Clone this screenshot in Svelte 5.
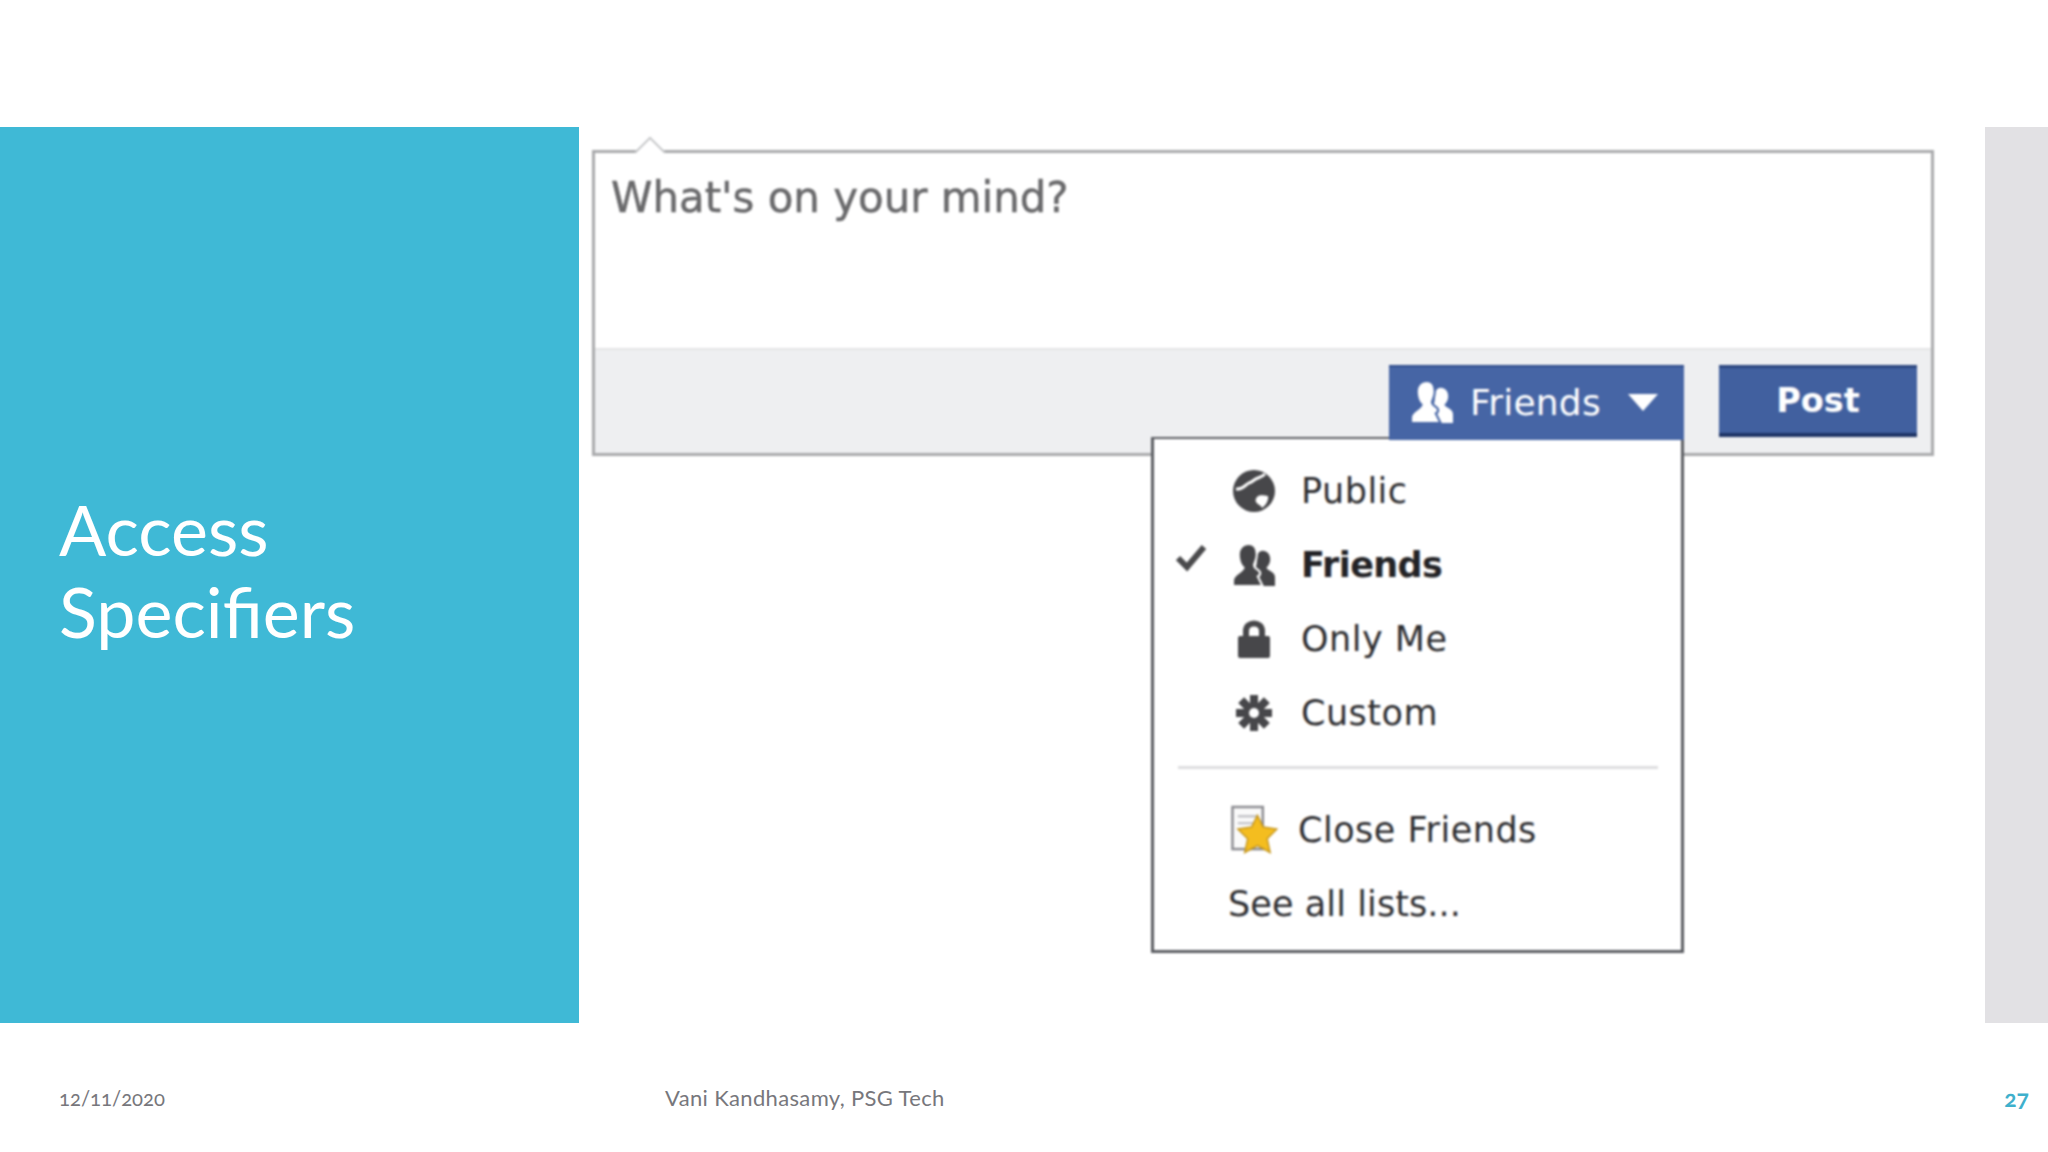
<script>
  const privacy = [
    { label: 'Public', icon: 'globe' },
    { label: 'Friends', icon: 'friends', active: true },
    { label: 'Only Me', icon: 'lock' },
    { label: 'Custom', icon: 'gear' }
  ];
  const teeth = [0, 45, 90, 135, 180, 225, 270, 315];
</script>

{#snippet friendsIcon(color, cut)}
  <svg class="icon-svg" viewBox="0 0 44 44">
    <path fill={color} d="M31 7c5 0 8 4 8 9 0 4-2 7-4 9 1 3 9 4 9 10v9H24V24c1-3 1-5 1-9 0-4 2-8 6-8z" />
    <path fill={color} stroke={cut} stroke-width="2.2" d="M16 0c6 0 9 5 9 11 0 5-2 8-3 11 0 4 4 4 6 7 1 2 0 4-2 5l5 10H0v-6c0-6 9-8 11-13-3-3-5-8-5-14C6 5 10 0 16 0z" />
  </svg>
{/snippet}

<div class="slide">
  <div class="main">
    <aside class="side">
      <h1>Access<br />Specifiers</h1>
    </aside>

    <section class="content">
      <div class="composer">
        <span class="notch"></span>
        <div class="prompt">What's on your mind?</div>
        <div class="bar">
          <div class="audience">
            {@render friendsIcon('#fff', '#4665a5')}
            <span>Friends</span>
            <svg class="caret" viewBox="0 0 30 20"><path fill="#fff" d="M0 2h30L15 19z" /></svg>
          </div>
          <div class="post">Post</div>
        </div>

        <div class="menu">
          <ul class="options">
            {#each privacy as item}
              <li class:active={item.active}>
                <span class="check">
                  {#if item.active}
                    <svg viewBox="0 0 30 28"><path fill="none" stroke="#4a4a4c" stroke-width="6" d="M2 14l9 9L28 3" /></svg>
                  {/if}
                </span>
                <span class="icon">
                  {#if item.icon === 'globe'}
                    <svg class="icon-svg" viewBox="0 0 42 42">
                      <circle cx="21" cy="21" r="21" fill="#47474a" />
                      <path fill="none" stroke="#fff" stroke-width="3" d="M3 19c6 1 9-4 13-6 4-1 5-4 9-5 3-1 5-2 7-4" />
                      <path fill="#fff" d="M24 27c4-3 7-1 11-1 1 5-3 10-6 12-1-3-4-3-6-6-1-2 0-4 1-5z" />
                    </svg>
                  {:else if item.icon === 'friends'}
                    {@render friendsIcon('#454548', '#fff')}
                  {:else if item.icon === 'lock'}
                    <svg class="icon-svg lock" viewBox="0 0 32 38">
                      <path fill="none" stroke="#47474a" stroke-width="6" d="M8 18V11c0-10 16-10 16 0v7" />
                      <rect y="16" width="32" height="22" rx="2" fill="#47474a" />
                    </svg>
                  {:else}
                    <svg class="icon-svg gear" viewBox="0 0 36 36">
                      {#each teeth as a}
                        <rect x="14" y="0" width="8" height="36" fill="#47474a" transform="rotate({a} 18 18)" />
                      {/each}
                      <circle cx="18" cy="18" r="10" fill="#47474a" />
                      <circle cx="18" cy="18" r="5" fill="#fff" />
                    </svg>
                  {/if}
                </span>
                <span class="label">{item.label}</span>
              </li>
            {/each}
          </ul>

          <div class="rule"></div>

          <div class="close-friends">
            <svg class="star-icon" viewBox="0 0 48 50">
              <rect x="1.5" y="1.5" width="31" height="43" fill="#fafafa" stroke="#8b8b90" stroke-width="2.5" />
              <path stroke="#c4c4c8" stroke-width="2.5" d="M7 11h20M7 18h20" />
              <path fill="#f4bd1f" stroke="#c6971f" stroke-width="1.5" d="M27 10l6 12 14 2-10 10 3 14-13-7-13 7 3-14L7 24l14-2z" />
            </svg>
            <span>Close Friends</span>
          </div>
          <div class="see-all">See all lists...</div>
        </div>
      </div>
    </section>

    <div class="gutter"></div>
  </div>

  <footer class="foot">
    <span class="date">12/11/2020</span>
    <span class="author">Vani Kandhasamy, PSG Tech</span>
    <span class="page">27</span>
  </footer>
</div>

<style>
  :global(body) {
    margin: 0;
    background: #fff;
  }

  .slide {
    width: 2048px;
    height: 1152px;
    padding-top: 127px;
    box-sizing: border-box;
    display: flex;
    flex-direction: column;
    overflow: hidden;
    font-family: "Lato", "Open Sans", sans-serif;
  }

  .main {
    height: 896px;
    display: flex;
  }

  .side {
    width: 579px;
    background: #3fb9d6;
    display: flex;
    align-items: center;
    padding-left: 59px;
    box-sizing: border-box;
  }

  h1 {
    margin: 0;
    padding-bottom: 10px;
    color: #fff;
    font-size: 70px;
    font-weight: 400;
    line-height: 82px;
  }

  .content {
    flex: 1;
    padding: 23px 0 0 13px;
    min-width: 0;
  }

  .gutter {
    width: 63px;
    background: #e2e1e4;
  }

  .composer {
    position: relative;
    width: 1342px;
    height: 306px;
    box-sizing: border-box;
    border: 3px solid #a9aaac;
    display: flex;
    flex-direction: column;
    filter: blur(0.8px);
    font-family: "DejaVu Sans", sans-serif;
  }

  .notch {
    position: absolute;
    left: 44px;
    top: -12px;
    width: 20px;
    height: 20px;
    background: #fff;
    border-top: 2px solid #c4c5c7;
    border-left: 2px solid #c4c5c7;
    transform: rotate(45deg);
  }

  .prompt {
    position: relative;
    height: 197px;
    box-sizing: border-box;
    padding: 19px 0 0 16px;
    color: #69696b;
    font-size: 41.9px;
    line-height: 52px;
    -webkit-text-stroke: 0.5px #69696b;
    border-bottom: 2px solid #e4e5e6;
  }

  .bar {
    flex: 1;
    background: #eeeff1;
    display: flex;
    justify-content: flex-end;
    gap: 35px;
    padding: 15px 14px 0 0;
  }

  .audience,
  .post {
    height: 72px;
    box-sizing: border-box;
    color: #fff;
    display: flex;
    align-items: center;
    font-size: 36px;
  }

  .audience {
    width: 295px;
    padding-left: 22px;
    background: #4665a5;
    border-top: 2px solid #2f4d8c;
  }

  .audience .icon-svg {
    width: 42px;
    height: 42px;
  }

  .audience span {
    margin-left: 17px;
    letter-spacing: 0.2px;
  }

  .caret {
    width: 30px;
    height: 20px;
    margin-left: 27px;
  }

  .post {
    width: 198px;
    justify-content: center;
    font-size: 33.5px;
    font-weight: 700;
    background: #41609f;
    border-top: 3px solid #2c4780;
    border-bottom: 4px solid #1f3566;
  }

  .menu {
    position: absolute;
    left: 556px;
    top: 284px;
    width: 533px;
    height: 516px;
    box-sizing: border-box;
    background: #fff;
    border: 3px solid #5b5d62;
    border-top-width: 2px;
    color: #2e2e31;
    font-size: 35px;
    letter-spacing: 0.5px;
    padding-top: 15px;
  }

  .menu::before {
    content: '';
    position: absolute;
    right: -3px;
    top: -2px;
    width: 295px;
    height: 3px;
    background: #4665a5;
  }

  .options {
    list-style: none;
    margin: 0;
    padding: 0;
  }

  .options li {
    height: 74px;
    display: flex;
    align-items: center;
    font-size: 35px;
  }

  .active .label {
    font-weight: 700;
    color: #232326;
    letter-spacing: -0.6px;
  }

  .check {
    width: 30px;
    margin-left: 22px;
    height: 30px;
    position: relative;
    top: -6px;
  }

  .check svg {
    display: block;
    width: 30px;
    height: 28px;
  }

  .icon {
    width: 44px;
    margin-left: 26px;
    display: flex;
    justify-content: center;
  }

  .icon-svg {
    display: block;
    width: 42px;
    height: 42px;
  }

  .lock {
    width: 32px;
    height: 38px;
  }

  .gear {
    width: 36px;
    height: 36px;
  }

  .label {
    margin-left: 25px;
  }

  .rule {
    height: 3px;
    margin: 16px 23px 0 24px;
    background: #dedee0;
  }

  .close-friends {
    display: flex;
    align-items: center;
    height: 74px;
    margin-top: 24px;
    padding-left: 77px;
  }

  .star-icon {
    width: 47px;
    height: 50px;
    margin-right: 20px;
  }

  .see-all {
    height: 74px;
    line-height: 74px;
    padding-left: 74px;
    letter-spacing: 0.1px;
  }

  .foot {
    flex: 1;
    display: flex;
    align-items: center;
    padding: 21px 19px 0 59px;
    color: #77777c;
    font-size: 22px;
    font-feature-settings: "onum";
  }

  .date {
    width: 606px;
    font-size: 20.3px;
  }

  .author {
    flex: 1;
    letter-spacing: 0.35px;
    position: relative;
    top: -1px;
  }

  .page {
    color: #3fb0cc;
    font-size: 23px;
    font-weight: 700;
  }
</style>
